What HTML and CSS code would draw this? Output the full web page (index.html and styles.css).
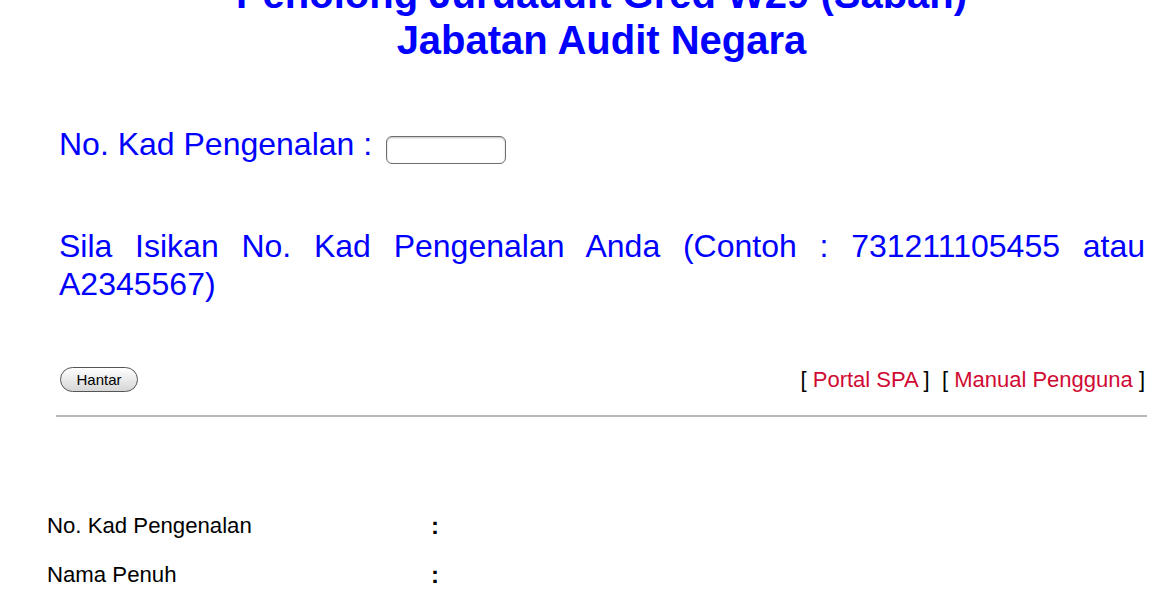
FILE: index.html
```html
<!DOCTYPE html>
<html lang="ms">
<head>
    <meta charset="UTF-8">
    <title>Jabatan Audit Negara</title>
    <link rel="stylesheet" href="styles.css">
</head>
<body>
    <div class="page">
        <h1 class="title">Penolong Juruaudit Gred W29 (Sabah)<br>Jabatan Audit Negara</h1>

        <form class="search">
            <div class="ic-row">
                <label for="nokp">No. Kad Pengenalan :</label>
                <input type="text" id="nokp" class="ic-input">
            </div>

            <p class="hint">Sila Isikan No. Kad Pengenalan Anda (Contoh : 731211105455 atau A2345567)</p>

            <div class="actions">
                <button type="button" class="btn">Hantar</button>
                <div class="links">
                    [ <a href="#">Portal SPA</a> ]&nbsp;&nbsp;[ <a href="#">Manual Pengguna</a> ]
                </div>
            </div>
        </form>

        <hr class="divider">
    </div>

    <div class="result">
        <div class="result-label">No. Kad Pengenalan</div>
        <div class="result-colon">:</div>
        <div class="result-value"></div>
        <div class="result-label">Nama Penuh</div>
        <div class="result-colon">:</div>
        <div class="result-value"></div>
    </div>
</body>
</html>
```

FILE: styles.css
```css
/* Reset */
* {
    margin: 0;
    padding: 0;
    box-sizing: border-box;
}

body {
    font-family: 'Liberation Sans', Arial, sans-serif;
    background: #fff;
    color: #000;
}

/* Main block */
.page {
    margin-left: 56px;
    width: 1091px;
}

.title {
    margin-top: -29px;
    font-size: 40px;
    font-weight: bold;
    line-height: 46px;
    text-align: center;
    color: #0000ff;
}

.search {
    padding: 0 2px 0 3px;
}

.ic-row {
    display: flex;
    align-items: flex-start;
    gap: 14px;
    margin-top: 63px;
    font-size: 32px;
    line-height: 37px;
    color: #0000ff;
}

.ic-input {
    width: 120px;
    height: 28px;
    margin-top: 10px;
    border: 1px solid #6e6e6e;
    border-radius: 6px;
    box-shadow: inset 0 1px 2px rgba(0, 0, 0, 0.25);
}

.hint {
    margin-top: 63px;
    font-size: 32px;
    line-height: 38px;
    text-align: justify;
    color: #0000ff;
}

/* Button and links */
.actions {
    display: flex;
    justify-content: space-between;
    align-items: flex-end;
    margin-top: 64px;
}

.btn {
    width: 78px;
    height: 25px;
    margin-left: 1px;
    border: 1px solid #555;
    border-radius: 13px;
    background: linear-gradient(#ffffff, #e6e6e6 60%, #d6d6d6);
    font-family: 'Liberation Sans', Arial, sans-serif;
    font-size: 15px;
    color: #000;
}

.links {
    font-size: 22px;
    line-height: 25px;
    margin-bottom: 0;
    color: #000;
}

.links a {
    color: #d00a32;
    text-decoration: none;
}

.divider {
    margin-top: 23px;
    border: none;
    height: 2px;
    background: #b8b8b8;
}

/* Result table */
.result {
    display: grid;
    grid-template-columns: 384px 30px 1fr;
    row-gap: 24px;
    margin: 96px 0 0 47px;
    font-size: 22.2px;
    line-height: 25px;
}

.result-colon {
    font-weight: bold;
    font-size: 24px;
}
```
